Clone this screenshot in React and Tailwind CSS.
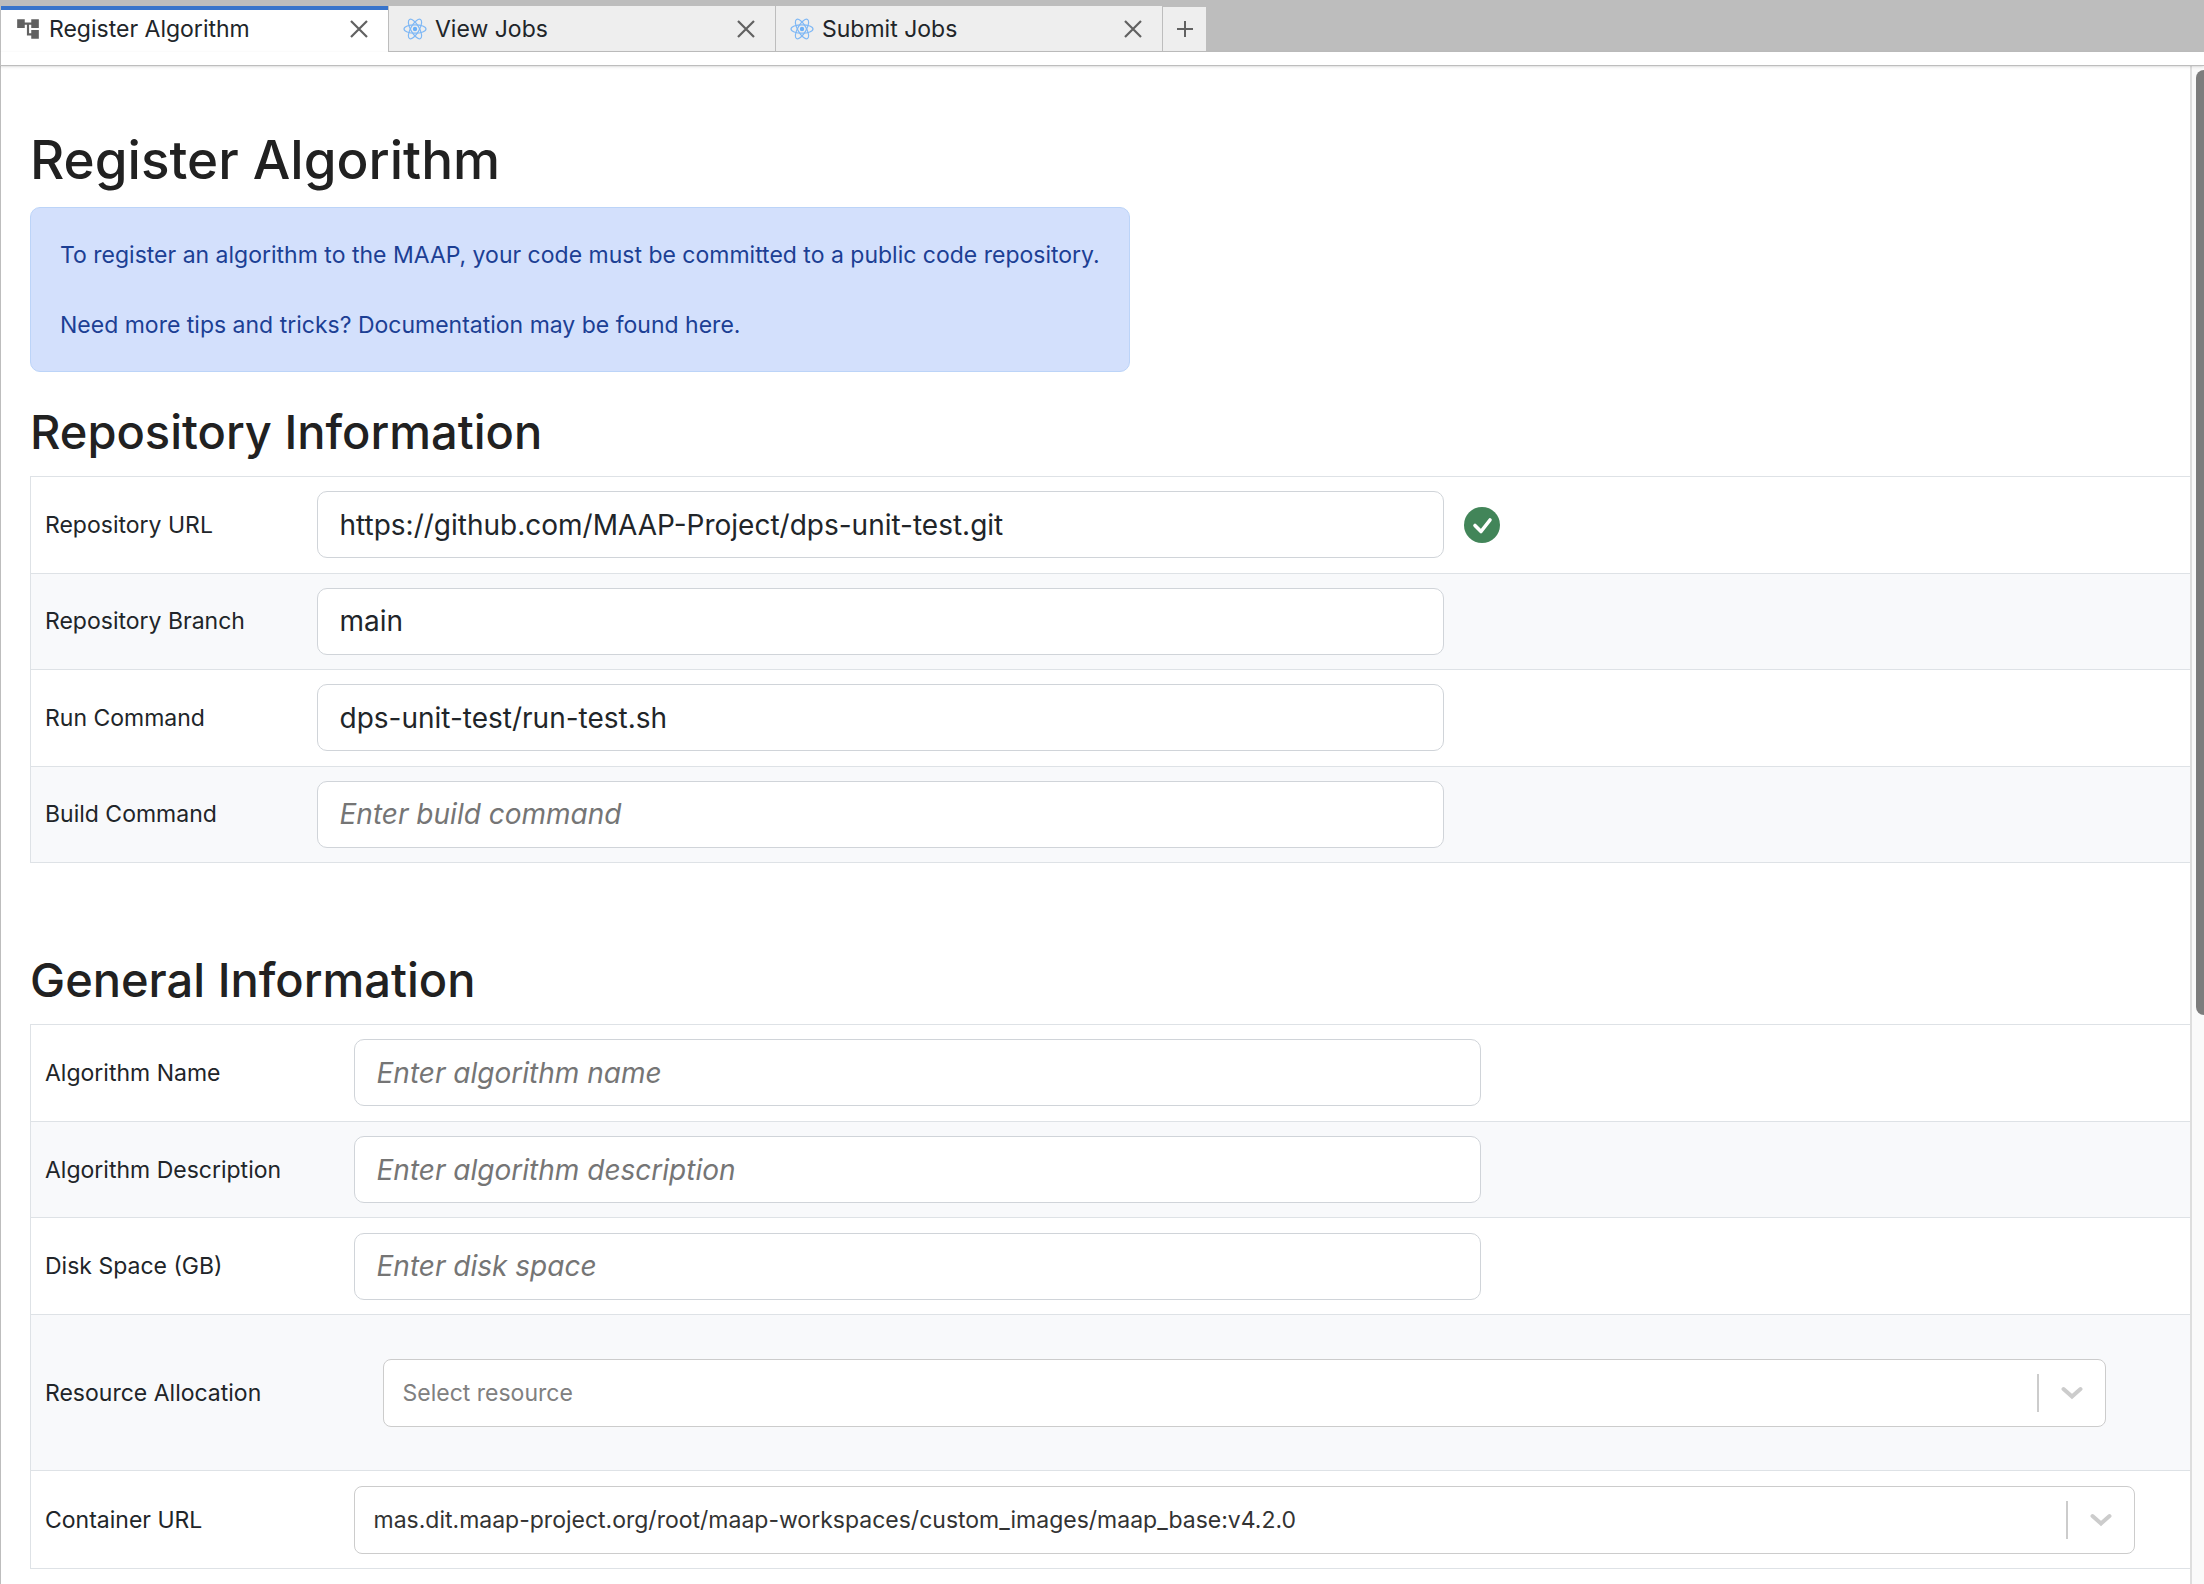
import { MdAccountTree } from "react-icons/md";

const tabs = [
  { name: "Register Algorithm", icon: "tree", active: true },
  { name: "View Jobs", icon: "react" },
  { name: "Submit Jobs", icon: "react" },
];

const repositoryFields = [
  { id: "repoUrl", label: "Repository URL", value: "https://github.com/MAAP-Project/dps-unit-test.git", valid: true },
  { id: "repoBranch", label: "Repository Branch", value: "main" },
  { id: "runCommand", label: "Run Command", value: "dps-unit-test/run-test.sh" },
  { id: "buildCommand", label: "Build Command", placeholder: "Enter build command" },
];

const generalFields = [
  { id: "algoName", label: "Algorithm Name", placeholder: "Enter algorithm name" },
  { id: "algoDesc", label: "Algorithm Description", placeholder: "Enter algorithm description" },
  { id: "diskSpace", label: "Disk Space (GB)", placeholder: "Enter disk space" },
];

const ReactIcon = () => (
  <svg viewBox="0 0 24 22" className="w-6 h-[22px] shrink-0" fill="none" stroke="#7fb8f5" strokeWidth="1.2">
    <ellipse cx="12" cy="11" rx="11" ry="4.2" />
    <ellipse cx="12" cy="11" rx="11" ry="4.2" transform="rotate(60 12 11)" />
    <ellipse cx="12" cy="11" rx="11" ry="4.2" transform="rotate(120 12 11)" />
    <circle cx="12" cy="11" r="2.2" fill="#6cb0f7" stroke="none" />
  </svg>
);

const CloseIcon = () => (
  <svg viewBox="0 0 18 18" className="size-[18px]" stroke="#616161" strokeWidth="2.2">
    <path d="M1 1l16 16M17 1l-16 16" />
  </svg>
);

const Tab = ({ tab }) => (
  <div
    role="tab"
    aria-selected={!!tab.active}
    className={
      tab.active
        ? "flex items-center w-[387px] h-[46px] border-t-4 border-[#3874cb] bg-white pl-[14px] pr-5 pb-1"
        : "flex items-center w-[387px] h-[46px] border-l border-b border-[#bdbdbd] bg-[#eeeeee] pl-[14px] pr-5"
    }
  >
    {tab.icon === "tree" ? <MdAccountTree className="size-[26px] shrink-0 text-[#616161]" /> : <ReactIcon />}
    <span className="ml-2 flex-1 leading-7">{tab.name}</span>
    <button type="button" aria-label={`Close ${tab.name}`}>
      <CloseIcon />
    </button>
  </div>
);

const TextField = ({ field }) => (
  <div className="flex items-center gap-5">
    <input
      id={field.id}
      type="text"
      defaultValue={field.value}
      placeholder={field.placeholder}
      className="w-[1127px] h-[67px] rounded-[10px] border border-[#d0d4d9] bg-white px-[22px] text-[28px] text-[#212529] placeholder:italic placeholder:text-[#757575]"
    />
    {field.valid && (
      <svg viewBox="0 0 36 36" className="size-9" role="img" aria-label="Valid">
        <circle cx="18" cy="18" r="18" fill="#428559" />
        <path d="M11 18.500l6 6 9-11.500" fill="none" stroke="#fff" strokeWidth="3.6" strokeLinecap="round" strokeLinejoin="round" />
      </svg>
    )}
  </div>
);

const SelectField = ({ id, option, muted }) => (
  <div className="flex items-center h-[68px] rounded-lg border border-[#cccccc] bg-white">
    <select
      id={id}
      className={
        muted
          ? "flex-1 h-full appearance-none pl-[19px] text-[#808080]"
          : "flex-1 h-full appearance-none pl-[19px] text-[#333333]"
      }
    >
      <option>{option}</option>
    </select>
    <span className="w-0.5 h-[38px] bg-[#cccccc]" />
    <svg viewBox="0 0 22 14" className="w-[22px] h-[14px] mx-[22px]" fill="none" stroke="#cccccc" strokeWidth="4" strokeLinecap="round">
      <path d="M2.500 3l8.500 7.500 8.500-7.500" />
    </svg>
  </div>
);

const Row = ({ id, label, children }) => (
  <tr className="border-y border-[#dee2e6] even:bg-[#f8f9fb]">
    <th scope="row" className="px-[14px] text-left font-normal">
      <label htmlFor={id}>{label}</label>
    </th>
    <td className="p-[14px]">{children}</td>
  </tr>
);

const App = () => {
  return (
    <div className="flex flex-col h-screen overflow-hidden bg-white font-[Inter,sans-serif] text-[23px] leading-9 text-[#212529]">
      <div role="tablist" className="flex items-end h-[52px] shrink-0 bg-[#bdbdbd] pl-px">
        {tabs.map((tab) => (
          <Tab key={tab.name} tab={tab} />
        ))}
        <button
          type="button"
          aria-label="New tab"
          className="flex items-center justify-center w-[45px] h-[45px] border-x border-b border-[#bdbdbd] bg-[#eeeeee]"
        >
          <svg viewBox="0 0 18 18" className="size-[18px]" stroke="#616161" strokeWidth="2">
            <path d="M1 9h16M9 1v16" />
          </svg>
        </button>
      </div>
      <div className="h-[14px] shrink-0 border-b border-l border-[#bdbdbd] shadow-sm z-10" />

      <div className="flex flex-1 min-h-0">
        <main className="flex-1 min-w-0 overflow-hidden border-l border-[#bdbdbd] pl-[29px] pt-[60px]">
          <h1 className="text-[53px] leading-[68px] font-medium text-[#212121]">Register Algorithm</h1>
          <div className="w-fit mt-[13px] rounded-[10px] border border-[#bcd4f8] bg-[#d3e0fc] px-[29px] pt-[29px] pb-7 text-[#1c3f94]">
            <p>To register an algorithm to the MAAP, your code must be committed to a public code repository.</p>
            <p className="mt-[34px]">
              Need more tips and tricks? Documentation may be found <a href="#docs">here</a>.
            </p>
          </div>

          <h2 className="mt-[30px] mb-[14px] text-[47px] leading-[60px] font-medium text-[#212121]">Repository Information</h2>
          <table className="w-full h-[387px] table-fixed border-collapse border-l border-[#dee2e6]">
            <colgroup>
              <col className="w-[272px]" />
              <col />
            </colgroup>
            <tbody>
              {repositoryFields.map((field) => (
                <Row key={field.id} id={field.id} label={field.label}>
                  <TextField field={field} />
                </Row>
              ))}
            </tbody>
          </table>

          <h2 className="mt-[87px] mb-[14px] text-[47px] leading-[60px] font-medium text-[#212121]">General Information</h2>
          <table className="w-full h-[545px] table-fixed border-collapse border-l border-[#dee2e6]">
            <colgroup>
              <col className="w-[309px]" />
              <col />
            </colgroup>
            <tbody>
              {generalFields.map((field) => (
                <Row key={field.id} id={field.id} label={field.label}>
                  <TextField field={field} />
                </Row>
              ))}
              <Row id="resource" label="Resource Allocation">
                <div className="my-[29px] ml-[29px] mr-[70px]">
                  <SelectField id="resource" option="Select resource" muted />
                </div>
              </Row>
              <Row id="container" label="Container URL">
                <div className="mr-[41px]">
                  <SelectField id="container" option="mas.dit.maap-project.org/root/maap-workspaces/custom_images/maap_base:v4.2.0" />
                </div>
              </Row>
            </tbody>
          </table>
        </main>
        <div className="w-[14px] shrink-0 overflow-hidden border-l-2 border-[#dedede] bg-[#fafafa] pl-1 pt-1">
          <div className="w-4 h-[945px] rounded-full bg-[#7d7d7d]" />
        </div>
      </div>
    </div>
  );
};

export default App;
